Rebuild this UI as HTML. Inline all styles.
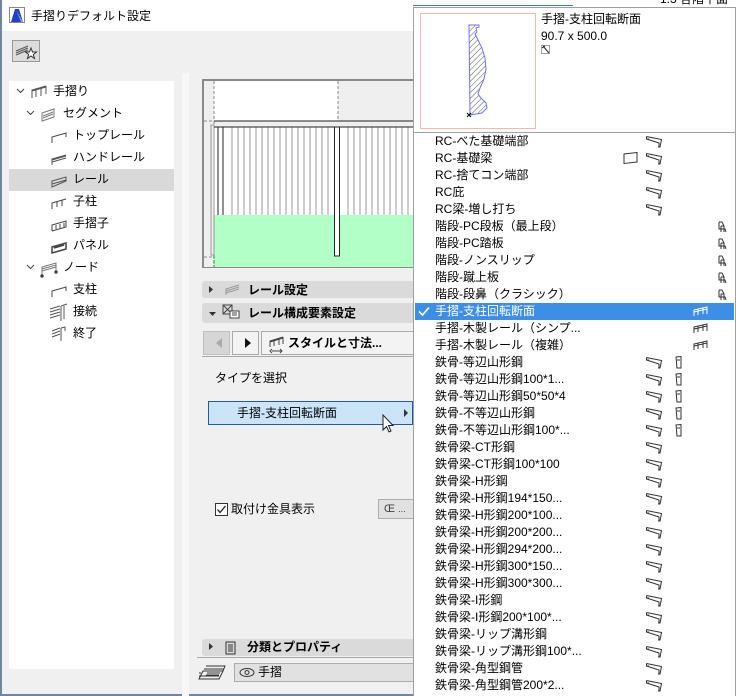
<!DOCTYPE html>
<html><head><meta charset="utf-8">
<style>
*{margin:0;padding:0;box-sizing:border-box}
body{width:736px;height:696px;overflow:hidden;background:#f0f0f0;font-family:"Liberation Sans","Noto Sans CJK JP",sans-serif;font-size:12px;color:#000;position:relative}
.a{position:absolute}
.t{position:absolute;white-space:nowrap;line-height:16px}
.row{position:absolute;left:413px;width:322px;height:17px}
.row span{position:absolute;left:22px;top:0;line-height:17px;white-space:nowrap}
.bi{position:absolute;left:233px;top:3px}
.ci{position:absolute;left:262px;top:2px}
.si{position:absolute;left:305px;top:3px}
.ri{position:absolute;left:280px;top:3px}
.sel{background:#3d8ee6;color:#fff}
</style></head><body>
<div class="a" style="left:0;top:0;width:2px;height:696px;background:#6f87a3"></div>
<div class="a" style="left:0;top:694px;width:413px;height:2px;background:#6f87a3"></div>
<div class="a" style="left:2px;top:0;width:411px;height:31px;background:#fff"></div>
<svg class="a" style="left:9px;top:7px" width="16" height="16"><rect x="0.5" y="0.5" width="15" height="15" fill="#fff" stroke="#888"/><path d="M2 15 L6 2 L10 2 L14 15Z" fill="#2540c0"/><path d="M7 3 L12 15 L14 15 Z" fill="#7fa0ff"/></svg>
<div class="t" style="left:31px;top:8px;font-size:12px">手摺りデフォルト設定</div>
<div class="a" style="left:12px;top:40px;width:28px;height:22px;background:#dcdcdc;border:1px solid #999"></div>
<svg class="a" style="left:14px;top:42px" width="24" height="18"><path d="M2 9 L14 4 M2 11 L14 6 M2 13 L14 8" stroke="#555" fill="none"/><path d="M17 6 L18.5 10 L22.5 10 L19.3 12.5 L20.5 16.5 L17 14 L13.5 16.5 L14.7 12.5 L11.5 10 L15.5 10Z" fill="#fff" stroke="#333"/></svg>
<div class="a" style="left:9px;top:81px;width:165px;height:588px;background:#fff"></div>
<div class="a" style="left:9px;top:169px;width:165px;height:22px;background:#d9d9d9"></div>
<svg class="a" style="left:0;top:80px" width="175" height="265" fill="none" stroke="#444" stroke-width="1">
<path d="M17 9 L20.5 12.5 L24 9"/><path d="M27 31 L30.5 34.5 L34 31"/><path d="M27 185 L30.5 188.5 L34 185"/>
<path d="M32 18 L32 10 L46 6 M32 11 L46 7 M36 17 L36 10 M41 16 L41 8 M46 14 L46 6" stroke="#555"/>
<path d="M42 41 L42 33 L54 29 L54 37 Z M43 36 L53 32 M43 38 L53 34" stroke="#777"/>
<path d="M52 63 L52 57 L66 53 L66 57"/>
<path d="M52 85 L52 79 L66 75 M52 80 L66 76 M52 82 L66 78" stroke="#555"/>
<path d="M52 107 L52 101 L66 97 L66 101 Z M52 104 L66 100" stroke="#555"/>
<path d="M52 129 L52 123 L66 119 M57 127 L57 121 M62 126 L62 120"/>
<path d="M52 151 L52 145 L66 141 L66 147 L52 151 M56 145 L56 149 M60 144 L60 148 M64 143 L64 147"/>
<path d="M52 173 L52 167 L66 163 L66 169 Z M54 168 L64 165" stroke-width="1.5"/>
<path d="M42 195 L42 187 L56 183 L56 190 M42 189 L56 185 M42 191 L56 187" stroke="#777"/><circle cx="42" cy="196" r="1.2" fill="#333"/><circle cx="56" cy="192" r="1.2" fill="#333"/>
<path d="M52 217 L52 211 L66 207 L66 211"/>
</svg>
<svg class="a" style="left:48px;top:303px" width="22" height="40" fill="none" stroke="#555"><path d="M2 6 L12 3 M2 9 L12 6 M2 12 L12 9 M2 15 L12 12 M13 3 L13 18 M13 3 L19 1 M16 3 L16 16"/><path d="M4 28 L12 25 M4 31 L12 28 M4 34 L12 31 M13 25 L13 38 M13 25 L17 24 L17 28"/></svg>
<div class="t" style="left:53px;top:83px">手摺り</div>
<div class="t" style="left:63px;top:105px">セグメント</div>
<div class="t" style="left:73px;top:127px">トップレール</div>
<div class="t" style="left:73px;top:149px">ハンドレール</div>
<div class="t" style="left:73px;top:171px">レール</div>
<div class="t" style="left:73px;top:193px">子柱</div>
<div class="t" style="left:73px;top:215px">手摺子</div>
<div class="t" style="left:73px;top:237px">パネル</div>
<div class="t" style="left:63px;top:259px">ノード</div>
<div class="t" style="left:73px;top:281px">支柱</div>
<div class="t" style="left:73px;top:303px">接続</div>
<div class="t" style="left:73px;top:325px">終了</div>
<div class="a" style="left:182px;top:73px;width:7px;height:623px;background:#f7f7f7"></div>
<div class="a" style="left:202px;top:79px;width:212px;height:189px;background:#efefef;border-left:2px solid #8a8a8a;border-top:2px solid #8a8a8a;border-bottom:1px solid #8a8a8a"></div>
<div class="a" style="left:214px;top:81px;width:124px;height:40px;background:#fff"></div>
<div class="a" style="left:214px;top:127px;width:199px;height:88px;background:#fff"></div>
<div class="a" style="left:214px;top:215px;width:199px;height:52px;background:#b3ffc8"></div>
<svg class="a" style="left:202px;top:79px" width="212" height="189">
<path d="M12 2 L12 188 M136 2 L136 42 M2 42 L12 42 M2 178 L12 178" stroke="#888" stroke-dasharray="3,2" fill="none"/>
<path d="M12 136 L12 188" stroke="#208040" stroke-dasharray="3,2"/>
<rect x="9" y="46" width="3" height="130" fill="none" stroke="#999"/>
<g stroke="#999">
<path d="M30 48V136M36 48V136M42 48V136M48 48V136M54 48V136M60 48V136M66 48V136M72 48V136M78 48V136M84 48V136M90 48V136M96 48V136M102 48V136M108 48V136M114 48V136M120 48V136M126 48V136M146 48V136M152 48V136M158 48V136M164 48V136M170 48V136M176 48V136M182 48V136M188 48V136M194 48V136M200 48V136M206 48V136"/>
</g>
<path d="M12 42 H212 M12 48 H212" stroke="#222" stroke-width="1"/>
<path d="M16 48V136 M21 48V136" stroke="#222"/>
<rect x="132.5" y="48" width="5" height="129" fill="#fff" stroke="#222"/>
</svg>
<div class="a" style="left:202px;top:281px;width:211px;height:17px;background:#dadada;border-radius:3px 0 0 3px"></div>
<div class="a" style="left:202px;top:303px;width:211px;height:20px;background:#dadada;border-radius:3px 0 0 3px"></div>
<svg class="a" style="left:206px;top:283px" width="40" height="38"><path d="M3 3 L7 6.5 L3 10Z" fill="#333"/><path d="M20 12 L20 6 L33 2 M20 8 L33 4 M20 10 L33 6" stroke="#999" fill="none"/><path d="M3 29 L10 29 L6.5 33Z" fill="#333"/><rect x="17" y="22" width="9" height="9" fill="none" stroke="#444"/><path d="M17 22 L26 31 M26 22 L17 31" stroke="#444"/><rect x="24" y="28" width="9" height="7" fill="#fff" stroke="#444"/><path d="M26 30 H31 M26 32 H31" stroke="#444"/></svg>
<div class="t" style="left:248px;top:282px;font-weight:bold">レール設定</div>
<div class="t" style="left:248px;top:305px;font-weight:bold">レール構成要素設定</div>
<div class="a" style="left:203px;top:331px;width:27px;height:24px;background:#d6d6d6;border:1px solid #c0c0c0"></div>
<div class="a" style="left:232px;top:331px;width:27px;height:24px;background:#f3f3f3;border:1px solid #aaa"></div>
<div class="a" style="left:261px;top:331px;width:153px;height:24px;background:#f3f3f3;border:1px solid #aaa;border-right:none"></div>
<svg class="a" style="left:203px;top:331px" width="100" height="24"><path d="M19 7 L13 12 L19 17Z" fill="#aaa"/><path d="M42 7 L48 12 L42 17Z" fill="#111"/><path d="M67 16 L67 10 L80 6 M67 11 L80 7 M71 15 L71 9 M76 14 L76 7 M80 13 L80 6 M69 20 H79 M69 18 L67 20 L69 22 M77 18 L79 20 L77 22" stroke="#444" fill="none"/></svg>
<div class="t" style="left:288px;top:335px;font-weight:bold">スタイルと寸法...</div>
<div class="a" style="left:202px;top:356px;width:211px;height:1px;background:#a8a8a8"></div>
<div class="t" style="left:215px;top:370px">タイプを選択</div>
<div class="a" style="left:208px;top:401px;width:205px;height:24px;background:#cce4f7;border:1px solid #1f5ba8"></div>
<div class="t" style="left:237px;top:405px">手摺-支柱回転断面</div>
<svg class="a" style="left:380px;top:406px" width="35" height="34"><path d="M24 3 L28 7 L24 11Z" fill="#333"/><path d="M3 9 L3 24 L6.5 20.5 L9 26 L11 25 L8.5 19.5 L13 19.5Z" fill="#fff" stroke="#222"/></svg>
<div class="a" style="left:215px;top:503px;width:13px;height:13px;background:#fff;border:1px solid #333"></div>
<svg class="a" style="left:215px;top:503px" width="13" height="13"><path d="M2.5 6.5 L5 9.5 L10.5 3" stroke="#222" stroke-width="1.3" fill="none"/></svg>
<div class="t" style="left:231px;top:501px">取付け金具表示</div>
<div class="a" style="left:378px;top:499px;width:35px;height:20px;background:#e1e1e1;border:1px solid #adadad;border-right:none"></div>
<div class="t" style="left:384px;top:501px;color:#444;font-size:11px">Œ <span style="font-size:9px">...</span></div>
<div class="a" style="left:202px;top:639px;width:211px;height:17px;background:#dadada;border-radius:3px 0 0 3px"></div>
<svg class="a" style="left:206px;top:640px" width="30" height="16"><path d="M3 3 L7 6.5 L3 10Z" fill="#333"/><rect x="20" y="2" width="9" height="12" fill="none" stroke="#333"/><path d="M22 5 H27 M22 7 H27 M22 9 H27 M22 11 H27" stroke="#333"/></svg>
<div class="t" style="left:247px;top:639px;font-weight:bold">分類とプロパティ</div>
<div class="a" style="left:197px;top:657px;width:216px;height:1px;background:#a8a8a8"></div>
<svg class="a" style="left:198px;top:663px" width="28" height="20" fill="none" stroke="#333"><path d="M1 16 L21 16 L25 8 L5 8 Z M1 13 H21 M1 10 H3 M6 6 L26 6 M8 3 L27 3 L25 8"/><path d="M9 10 L22 10 M8 12 L21 12" /></svg>
<div class="a" style="left:234px;top:663px;width:179px;height:19px;background:#e1e1e1;border:1px solid #adadad;border-right:none"></div>
<svg class="a" style="left:239px;top:667px" width="16" height="11"><ellipse cx="8" cy="5.5" rx="7" ry="4" fill="none" stroke="#333"/><circle cx="8" cy="5.5" r="2" fill="none" stroke="#333"/></svg>
<div class="t" style="left:258px;top:664px">手摺</div>

<div class="a" style="left:413px;top:0;width:323px;height:7px;background:#fff"></div>
<div class="a" style="left:413px;top:5px;width:160px;height:1px;background:#4a78b0"></div>
<div class="t" style="left:660px;top:-9px;font-size:12px">1.3 各階平面</div>

<div class="a" style="left:413px;top:7px;width:323px;height:689px;background:#fff;border:1px solid #a0a0a0;border-bottom:none"></div>
<div class="a" style="left:414px;top:132px;width:321px;height:1px;background:#a0a0a0"></div>
<div class="a" style="left:420px;top:13px;width:116px;height:116px;border:1px solid #f4b8b8;background:#fff"></div>
<svg class="a" style="left:465px;top:24px" width="35" height="95"><defs><pattern id="h" width="4" height="4" patternUnits="userSpaceOnUse" patternTransform="rotate(45)"><line x1="0" y1="0" x2="0" y2="4" stroke="#555" stroke-width="1"/></pattern></defs><path d="M4 1 L14 1 L14 3 L11 4 L12 8 L10 10 L13 16 L17 24 L20 34 L21 45 L19 55 L15 64 L13 70 L16 74 L21 79 L22 84 L17 89 L5 91 Z" fill="url(#h)" stroke="#7070ff"/><path d="M2 89 L6 93 M6 89 L2 93" stroke="#000"/></svg>
<div class="t" style="left:541px;top:11px">手摺-支柱回転断面</div>
<div class="t" style="left:541px;top:28px">90.7 x 500.0</div>
<svg class="a" style="left:541px;top:45px" width="10" height="10"><rect x="0.5" y="0.5" width="8" height="8" fill="none" stroke="#444" stroke-dasharray="1,1"/><path d="M2 1 L8 8 M1 3 L4 1" stroke="#222"/></svg>

<svg width="0" height="0" style="position:absolute"><defs>
<g id="beam"><path d="M0.5 0.5 L15.5 3.5 L14 11 L12 11 M0.5 0.5 L0.5 3 L13 7 L13 11 M0.5 3 L3 3" fill="none" stroke="#333"/></g>
<g id="col"><path d="M1 1 L6 0.5 L6 12 L2 12 Z M2 4 H5" fill="none" stroke="#333"/></g>
<g id="stair"><path d="M1 1 L4 1 L6 5 L6 11 M1 1 L1 8 L7 8 L8 11 M3 5 L6 5 M3 5 L3 11" fill="none" stroke="#333"/></g>
<g id="rail"><path d="M1 10 L1 4 L14 1 L14 8 M1 6 L14 3 M5 9 L5 3.5 M10 8 L10 2" fill="none" stroke="#333"/></g>
<g id="slab"><path d="M1 2 L14 0.5 L14 10 L1 11.5 Z" fill="none" stroke="#333"/></g>
</defs></svg>

<div class="row" style="top:133px"><span>RC-べた基礎端部</span><svg class="bi" width="17" height="12"><use href="#beam"/></svg></div>
<div class="row" style="top:150px"><span>RC-基礎梁</span><svg class="a" style="left:210px;top:2px" width="16" height="13"><use href="#slab"/></svg><svg class="bi" width="17" height="12"><use href="#beam"/></svg></div>
<div class="row" style="top:167px"><span>RC-捨てコン端部</span><svg class="bi" width="17" height="12"><use href="#beam"/></svg></div>
<div class="row" style="top:184px"><span>RC庇</span><svg class="bi" width="17" height="12"><use href="#beam"/></svg></div>
<div class="row" style="top:201px"><span>RC梁-増し打ち</span><svg class="bi" width="17" height="12"><use href="#beam"/></svg></div>
<div class="row" style="top:218px"><span>階段-PC段板（最上段）</span><svg class="si" width="10" height="12"><use href="#stair"/></svg></div>
<div class="row" style="top:235px"><span>階段-PC踏板</span><svg class="si" width="10" height="12"><use href="#stair"/></svg></div>
<div class="row" style="top:252px"><span>階段-ノンスリップ</span><svg class="si" width="10" height="12"><use href="#stair"/></svg></div>
<div class="row" style="top:269px"><span>階段-蹴上板</span><svg class="si" width="10" height="12"><use href="#stair"/></svg></div>
<div class="row" style="top:286px"><span>階段-段鼻（クラシック）</span><svg class="si" width="10" height="12"><use href="#stair"/></svg></div>
<div class="row sel" style="top:303px;left:415px;width:319px"><span style="left:20px">手摺-支柱回転断面</span><svg class="a" style="left:3px;top:3px" width="12" height="11"><path d="M1 5.5 L4.5 9 L11 1.5" stroke="#fff" stroke-width="1.6" fill="none"/></svg><svg class="a" style="left:278px;top:3px" width="16" height="12"><path d="M1 10 L1 4 L14 1 L14 8 M1 6 L14 3 M5 9 L5 3.5 M10 8 L10 2" fill="none" stroke="#fff"/></svg></div>
<div class="row" style="top:320px"><span>手摺-木製レール（シンプ...</span><svg class="ri" width="16" height="12"><use href="#rail"/></svg></div>
<div class="row" style="top:337px"><span>手摺-木製レール（複雑）</span><svg class="ri" width="16" height="12"><use href="#rail"/></svg></div>
<div class="row" style="top:354px"><span>鉄骨-等辺山形鋼</span><svg class="bi" width="17" height="12"><use href="#beam"/></svg><svg class="ci" width="8" height="14"><use href="#col"/></svg></div>
<div class="row" style="top:371px"><span>鉄骨-等辺山形鋼100*1...</span><svg class="bi" width="17" height="12"><use href="#beam"/></svg><svg class="ci" width="8" height="14"><use href="#col"/></svg></div>
<div class="row" style="top:388px"><span>鉄骨-等辺山形鋼50*50*4</span><svg class="bi" width="17" height="12"><use href="#beam"/></svg><svg class="ci" width="8" height="14"><use href="#col"/></svg></div>
<div class="row" style="top:405px"><span>鉄骨-不等辺山形鋼</span><svg class="bi" width="17" height="12"><use href="#beam"/></svg><svg class="ci" width="8" height="14"><use href="#col"/></svg></div>
<div class="row" style="top:422px"><span>鉄骨-不等辺山形鋼100*...</span><svg class="bi" width="17" height="12"><use href="#beam"/></svg><svg class="ci" width="8" height="14"><use href="#col"/></svg></div>
<div class="row" style="top:439px"><span>鉄骨梁-CT形鋼</span><svg class="bi" width="17" height="12"><use href="#beam"/></svg></div>
<div class="row" style="top:456px"><span>鉄骨梁-CT形鋼100*100</span><svg class="bi" width="17" height="12"><use href="#beam"/></svg></div>
<div class="row" style="top:473px"><span>鉄骨梁-H形鋼</span><svg class="bi" width="17" height="12"><use href="#beam"/></svg></div>
<div class="row" style="top:490px"><span>鉄骨梁-H形鋼194*150...</span><svg class="bi" width="17" height="12"><use href="#beam"/></svg></div>
<div class="row" style="top:507px"><span>鉄骨梁-H形鋼200*100...</span><svg class="bi" width="17" height="12"><use href="#beam"/></svg></div>
<div class="row" style="top:524px"><span>鉄骨梁-H形鋼200*200...</span><svg class="bi" width="17" height="12"><use href="#beam"/></svg></div>
<div class="row" style="top:541px"><span>鉄骨梁-H形鋼294*200...</span><svg class="bi" width="17" height="12"><use href="#beam"/></svg></div>
<div class="row" style="top:558px"><span>鉄骨梁-H形鋼300*150...</span><svg class="bi" width="17" height="12"><use href="#beam"/></svg></div>
<div class="row" style="top:575px"><span>鉄骨梁-H形鋼300*300...</span><svg class="bi" width="17" height="12"><use href="#beam"/></svg></div>
<div class="row" style="top:592px"><span>鉄骨梁-I形鋼</span><svg class="bi" width="17" height="12"><use href="#beam"/></svg></div>
<div class="row" style="top:609px"><span>鉄骨梁-I形鋼200*100*...</span><svg class="bi" width="17" height="12"><use href="#beam"/></svg></div>
<div class="row" style="top:626px"><span>鉄骨梁-リップ溝形鋼</span><svg class="bi" width="17" height="12"><use href="#beam"/></svg></div>
<div class="row" style="top:643px"><span>鉄骨梁-リップ溝形鋼100*...</span><svg class="bi" width="17" height="12"><use href="#beam"/></svg></div>
<div class="row" style="top:660px"><span>鉄骨梁-角型鋼管</span><svg class="bi" width="17" height="12"><use href="#beam"/></svg></div>
<div class="row" style="top:677px"><span>鉄骨梁-角型鋼管200*2...</span><svg class="bi" width="17" height="12"><use href="#beam"/></svg></div>
</body></html>
